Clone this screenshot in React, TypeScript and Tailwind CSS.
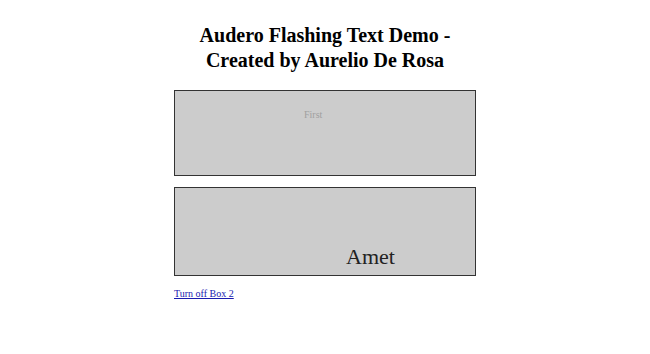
import React from "react";

export default function App() {
  return (
    <div className="w-[650px] h-[354px] bg-white" style={{ fontFamily: '"Liberation Serif", "Times New Roman", serif' }}>
      <div className="pt-[23px] flex flex-col items-center">
        <h1 className="text-[20px] leading-[25px] font-bold text-black text-center">
          Audero Flashing Text Demo -<br />Created by Aurelio De Rosa
        </h1>
        <div className="w-[302px] mt-[17px]">
          <div className="relative h-[86px] border border-[#333] bg-[#cccccc]">
            <span className="absolute left-[129px] top-[19px] text-[10px] leading-none text-[#a0a0a0]">First</span>
          </div>
          <div className="relative h-[89px] mt-[11px] border border-[#333] bg-[#cccccc]">
            <span className="absolute left-[171px] top-[58px] text-[22px] leading-none text-[#222]">Amet</span>
          </div>
          <div className="mt-[12px] text-[10px] leading-[11.5px]">
            <a href="#" className="text-[#1a1ab0] underline">Turn off Box 2</a>
          </div>
        </div>
      </div>
    </div>
  );
}
